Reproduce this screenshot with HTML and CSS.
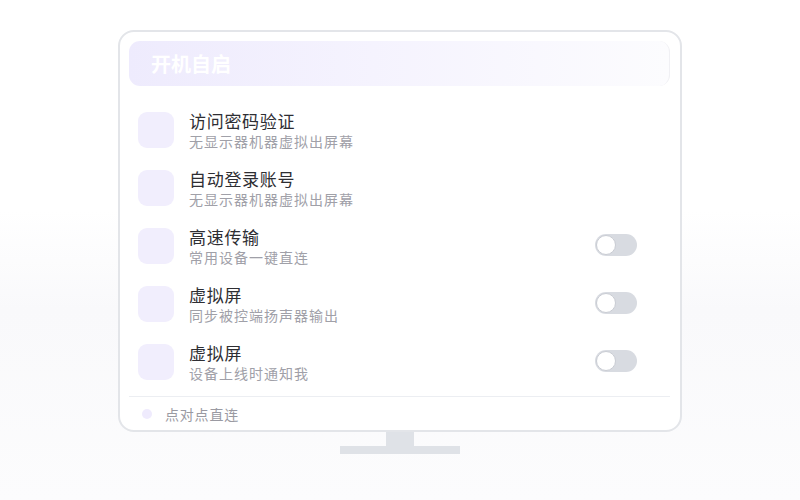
FILE: index.html
```html
<!DOCTYPE html>
<html lang="zh-CN">
<head>
    <meta charset="UTF-8">
    <meta name="viewport" content="width=device-width, initial-scale=1.0">
    <title>开机自启</title>
    <link rel="stylesheet" href="styles.css">
</head>
<body>
    <div class="monitor">
        <div class="screen">
            <div class="header">开机自启</div>
            <div class="list">
                <div class="row">
                    <div class="icon"></div>
                    <div class="text">
                        <div class="title">访问密码验证</div>
                        <div class="desc">无显示器机器虚拟出屏幕</div>
                    </div>
                </div>
                <div class="row">
                    <div class="icon"></div>
                    <div class="text">
                        <div class="title">自动登录账号</div>
                        <div class="desc">无显示器机器虚拟出屏幕</div>
                    </div>
                </div>
                <div class="row">
                    <div class="icon"></div>
                    <div class="text">
                        <div class="title">高速传输</div>
                        <div class="desc">常用设备一键直连</div>
                    </div>
                    <div class="toggle"><span class="knob"></span></div>
                </div>
                <div class="row">
                    <div class="icon"></div>
                    <div class="text">
                        <div class="title">虚拟屏</div>
                        <div class="desc">同步被控端扬声器输出</div>
                    </div>
                    <div class="toggle"><span class="knob"></span></div>
                </div>
                <div class="row">
                    <div class="icon"></div>
                    <div class="text">
                        <div class="title">虚拟屏</div>
                        <div class="desc">设备上线时通知我</div>
                    </div>
                    <div class="toggle"><span class="knob"></span></div>
                </div>
            </div>
            <div class="footer">
                <span class="dot"></span>
                <span>点对点直连</span>
            </div>
        </div>
        <div class="neck"></div>
        <div class="base"></div>
    </div>
</body>
</html>
```

FILE: styles.css
```css
body {
    margin: 0;
    height: 500px;
    font-family: "Noto Sans CJK SC", "Noto Sans", sans-serif;
    background: linear-gradient(180deg, #fff 0%, #fff 42%, #f9f9fb 62%, #fcfcfd 100%);
    overflow: hidden;
}
.monitor {
    width: 564px;
    margin: 30px auto 0;
    display: flex;
    flex-direction: column;
    align-items: center;
}
.screen {
    box-sizing: border-box;
    width: 564px;
    height: 402px;
    padding: 9px 10px 0 9px;
    border: 2px solid #e3e5e9;
    border-radius: 16px;
    background: #fff;
    display: flex;
    flex-direction: column;
}
.header {
    height: 45px;
    padding-left: 22px;
    border-radius: 11px;
    border-right: 1px solid #f0f0f4;
    background: linear-gradient(90deg, #eeebfd 0%, #f5f3fe 45%, #fcfcfe 100%);
    color: #fff;
    font-size: 20px;
    font-weight: 700;
    line-height: 45px;
}
.list {
    padding: 26px 33px 0 9px;
    display: flex;
    flex-direction: column;
    gap: 18px;
}
.row {
    height: 40px;
    display: flex;
    align-items: flex-start;
}
.icon {
    width: 36px;
    height: 36px;
    border-radius: 9px;
    background: #f1eefd;
    flex-shrink: 0;
}
.text {
    flex: 1;
    margin-left: 15px;
    margin-top: -2px;
}
.title {
    font-size: 17px;
    line-height: 21px;
    letter-spacing: 0.7px;
    color: #2e2e33;
}
.desc {
    margin-top: 1px;
    font-size: 14px;
    line-height: 18px;
    letter-spacing: 1px;
    color: #a0a0a8;
}
.toggle {
    position: relative;
    margin-top: 6px;
    width: 42px;
    height: 22px;
    border-radius: 11px;
    background: #d8dbe1;
}
.knob {
    position: absolute;
    left: 1px;
    top: 1px;
    width: 18px;
    height: 18px;
    border-radius: 50%;
    background: #fff;
    border: 1px solid #c9ccd3;
}
.footer {
    margin-top: 12px;
    border-top: 1px solid #eceef2;
    height: 33px;
    padding-left: 13px;
    display: flex;
    align-items: center;
    gap: 13px;
    font-size: 14px;
    letter-spacing: 0.8px;
    color: #9a9aa2;
}
.dot {
    width: 10px;
    height: 10px;
    border-radius: 50%;
    background: #efebfd;
}
.neck {
    width: 28px;
    height: 14px;
    background: #dfe2e7;
}
.base {
    width: 120px;
    height: 8px;
    background: #dfe2e7;
}
```
